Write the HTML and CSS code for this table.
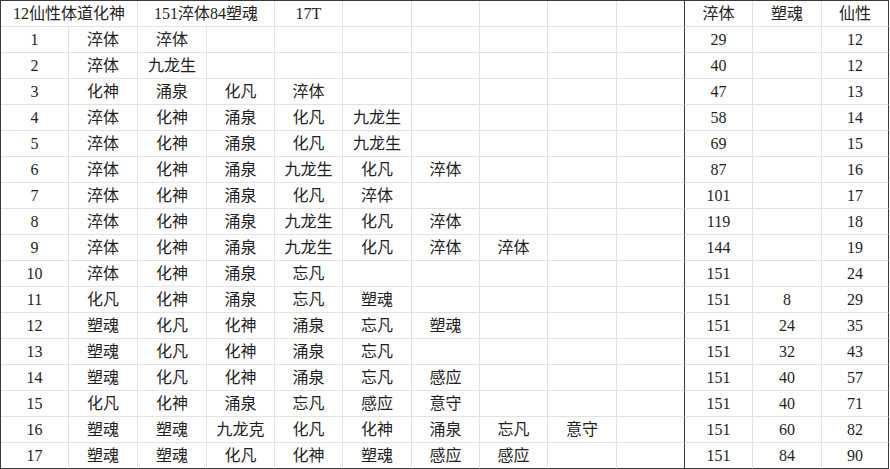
FILE: index.html
```html
<!DOCTYPE html>
<html lang="zh">
<head>
<meta charset="utf-8">
<link rel="stylesheet" href="styles.css">
</head>
<body>
<div class="sheet">
  <div class="row"><div class="c span2">12仙性体道化神</div><div class="c span2">151淬体84塑魂</div><div class="c">17T</div><div class="c"></div><div class="c"></div><div class="c"></div><div class="c"></div><div class="c sep"></div><div class="c">淬体</div><div class="c">塑魂</div><div class="c last">仙性</div></div>
  <div class="row"><div class="c">1</div><div class="c">淬体</div><div class="c">淬体</div><div class="c"></div><div class="c"></div><div class="c"></div><div class="c"></div><div class="c"></div><div class="c"></div><div class="c sep"></div><div class="c">29</div><div class="c"></div><div class="c last">12</div></div>
  <div class="row"><div class="c">2</div><div class="c">淬体</div><div class="c">九龙生</div><div class="c"></div><div class="c"></div><div class="c"></div><div class="c"></div><div class="c"></div><div class="c"></div><div class="c sep"></div><div class="c">40</div><div class="c"></div><div class="c last">12</div></div>
  <div class="row"><div class="c">3</div><div class="c">化神</div><div class="c">涌泉</div><div class="c">化凡</div><div class="c">淬体</div><div class="c"></div><div class="c"></div><div class="c"></div><div class="c"></div><div class="c sep"></div><div class="c">47</div><div class="c"></div><div class="c last">13</div></div>
  <div class="row"><div class="c">4</div><div class="c">淬体</div><div class="c">化神</div><div class="c">涌泉</div><div class="c">化凡</div><div class="c">九龙生</div><div class="c"></div><div class="c"></div><div class="c"></div><div class="c sep"></div><div class="c">58</div><div class="c"></div><div class="c last">14</div></div>
  <div class="row"><div class="c">5</div><div class="c">淬体</div><div class="c">化神</div><div class="c">涌泉</div><div class="c">化凡</div><div class="c">九龙生</div><div class="c"></div><div class="c"></div><div class="c"></div><div class="c sep"></div><div class="c">69</div><div class="c"></div><div class="c last">15</div></div>
  <div class="row"><div class="c">6</div><div class="c">淬体</div><div class="c">化神</div><div class="c">涌泉</div><div class="c">九龙生</div><div class="c">化凡</div><div class="c">淬体</div><div class="c"></div><div class="c"></div><div class="c sep"></div><div class="c">87</div><div class="c"></div><div class="c last">16</div></div>
  <div class="row"><div class="c">7</div><div class="c">淬体</div><div class="c">化神</div><div class="c">涌泉</div><div class="c">化凡</div><div class="c">淬体</div><div class="c"></div><div class="c"></div><div class="c"></div><div class="c sep"></div><div class="c">101</div><div class="c"></div><div class="c last">17</div></div>
  <div class="row"><div class="c">8</div><div class="c">淬体</div><div class="c">化神</div><div class="c">涌泉</div><div class="c">九龙生</div><div class="c">化凡</div><div class="c">淬体</div><div class="c"></div><div class="c"></div><div class="c sep"></div><div class="c">119</div><div class="c"></div><div class="c last">18</div></div>
  <div class="row"><div class="c">9</div><div class="c">淬体</div><div class="c">化神</div><div class="c">涌泉</div><div class="c">九龙生</div><div class="c">化凡</div><div class="c">淬体</div><div class="c">淬体</div><div class="c"></div><div class="c sep"></div><div class="c">144</div><div class="c"></div><div class="c last">19</div></div>
  <div class="row"><div class="c">10</div><div class="c">淬体</div><div class="c">化神</div><div class="c">涌泉</div><div class="c">忘凡</div><div class="c"></div><div class="c"></div><div class="c"></div><div class="c"></div><div class="c sep"></div><div class="c">151</div><div class="c"></div><div class="c last">24</div></div>
  <div class="row"><div class="c">11</div><div class="c">化凡</div><div class="c">化神</div><div class="c">涌泉</div><div class="c">忘凡</div><div class="c">塑魂</div><div class="c"></div><div class="c"></div><div class="c"></div><div class="c sep"></div><div class="c">151</div><div class="c">8</div><div class="c last">29</div></div>
  <div class="row"><div class="c">12</div><div class="c">塑魂</div><div class="c">化凡</div><div class="c">化神</div><div class="c">涌泉</div><div class="c">忘凡</div><div class="c">塑魂</div><div class="c"></div><div class="c"></div><div class="c sep"></div><div class="c">151</div><div class="c">24</div><div class="c last">35</div></div>
  <div class="row"><div class="c">13</div><div class="c">塑魂</div><div class="c">化凡</div><div class="c">化神</div><div class="c">涌泉</div><div class="c">忘凡</div><div class="c"></div><div class="c"></div><div class="c"></div><div class="c sep"></div><div class="c">151</div><div class="c">32</div><div class="c last">43</div></div>
  <div class="row"><div class="c">14</div><div class="c">塑魂</div><div class="c">化凡</div><div class="c">化神</div><div class="c">涌泉</div><div class="c">忘凡</div><div class="c">感应</div><div class="c"></div><div class="c"></div><div class="c sep"></div><div class="c">151</div><div class="c">40</div><div class="c last">57</div></div>
  <div class="row"><div class="c">15</div><div class="c">化凡</div><div class="c">化神</div><div class="c">涌泉</div><div class="c">忘凡</div><div class="c">感应</div><div class="c">意守</div><div class="c"></div><div class="c"></div><div class="c sep"></div><div class="c">151</div><div class="c">40</div><div class="c last">71</div></div>
  <div class="row"><div class="c">16</div><div class="c">塑魂</div><div class="c">塑魂</div><div class="c">九龙克</div><div class="c">化凡</div><div class="c">化神</div><div class="c">涌泉</div><div class="c">忘凡</div><div class="c">意守</div><div class="c sep"></div><div class="c">151</div><div class="c">60</div><div class="c last">82</div></div>
  <div class="row"><div class="c">17</div><div class="c">塑魂</div><div class="c">塑魂</div><div class="c">化凡</div><div class="c">化神</div><div class="c">塑魂</div><div class="c">感应</div><div class="c">感应</div><div class="c"></div><div class="c sep"></div><div class="c">151</div><div class="c">84</div><div class="c last">90</div></div>
</div>
</body>
</html>
```

FILE: styles.css
```css
html, body {
  margin: 0;
  padding: 0;
  background: #ffffff;
}

.sheet {
  display: grid;
  grid-template-columns: 68px 69px 69px 68px 68px 69px 68px 68px 69px 68px 68px 69px 67px;
  grid-auto-rows: 26px;
  width: max-content;
  border-left: 1px solid #3a3a3a;
  border-top: 1px solid #3a3a3a;
  font-family: "Liberation Serif", "Noto Sans CJK SC", serif;
  font-size: 16px;
  color: #1e1e1e;
}

.row {
  display: contents;
}

.c {
  box-sizing: border-box;
  display: flex;
  align-items: center;
  justify-content: center;
  border-right: 1px solid #e2e2e2;
  border-bottom: 1px solid #e2e2e2;
  white-space: nowrap;
  line-height: 1;
  padding-top: 1px;
}

.span2 {
  grid-column: span 2;
}

.sep {
  border-right-color: #3a3a3a;
}

.last {
  border-right-color: #3a3a3a;
}

.row:last-child .c {
  border-bottom-color: #3a3a3a;
}
```
